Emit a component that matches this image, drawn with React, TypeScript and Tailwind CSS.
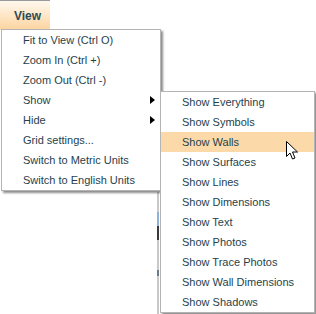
import React from "react";

const mainItems: { label: string; sub?: boolean }[] = [
  { label: "Fit to View (Ctrl O)" },
  { label: "Zoom In (Ctrl +)" },
  { label: "Zoom Out (Ctrl -)" },
  { label: "Show", sub: true },
  { label: "Hide", sub: true },
  { label: "Grid settings..." },
  { label: "Switch to Metric Units" },
  { label: "Switch to English Units" },
];

const subItems = [
  "Show Everything",
  "Show Symbols",
  "Show Walls",
  "Show Surfaces",
  "Show Lines",
  "Show Dimensions",
  "Show Text",
  "Show Photos",
  "Show Trace Photos",
  "Show Wall Dimensions",
  "Show Shadows",
];

export default function App() {
  return (
    <div
      className="relative w-[316px] h-[314px] bg-white overflow-hidden text-[#1f3f4c]"
      style={{ fontFamily: '"Liberation Sans", Arial, sans-serif' }}
    >
      {/* View button */}
      <div className="absolute left-0 top-0 w-[50px] h-[30px] border-t border-[#9a9a9a] bg-gradient-to-b from-[#fff8ee] to-[#fcd49e] flex items-center pl-[14px]">
        <span className="text-[12px] font-bold text-[#2c4a58]">View</span>
      </div>

      {/* background artifact */}
      <div className="absolute left-[157px] top-[192px] w-[2px] h-[122px] bg-[#c9c9c9] flex flex-col">
        <div className="mt-[20px] h-[14px] bg-[#8fb0d8]" />
        <div className="h-[14px] bg-[#3a3a3a]" />
        <div className="mt-[30px] h-[6px] bg-[#6b7c88]" />
      </div>

      {/* main menu */}
      <div className="absolute left-[1px] top-[29px] w-[160px] bg-white border border-[#b4b4b4] shadow-[2px_2px_2px_rgba(0,0,0,0.45)]">
        {mainItems.map((it) => (
          <div key={it.label} className="h-[20px] flex items-center pl-[21px] pr-[5px] text-[11px]">
            <span>{it.label}</span>
            {it.sub && (
              <svg className="ml-auto" width="5" height="8" viewBox="0 0 5 8">
                <path d="M0 0 L5 4 L0 8 Z" fill="#000" />
              </svg>
            )}
          </div>
        ))}
      </div>

      {/* submenu */}
      <div className="absolute left-[160px] top-[91px] w-[155px] bg-white border border-[#b4b4b4] shadow-[2px_2px_2px_rgba(0,0,0,0.45)]">
        {subItems.map((s) => (
          <div
            key={s}
            className={`h-[20px] flex items-center pl-[21px] text-[11px] ${s === "Show Walls" ? "bg-[#fcd9a8]" : ""}`}
          >
            {s}
          </div>
        ))}
      </div>

      {/* cursor */}
      <svg className="absolute left-[286px] top-[141px]" width="13" height="20" viewBox="0 0 13 20">
        <path
          d="M0.5 0.5 L0.5 15.5 L4 12 L6.5 18 L9 17 L6.5 11 L11.5 11 Z"
          fill="#fff"
          stroke="#000"
          strokeWidth="1"
          strokeLinejoin="miter"
        />
      </svg>
    </div>
  );
}
